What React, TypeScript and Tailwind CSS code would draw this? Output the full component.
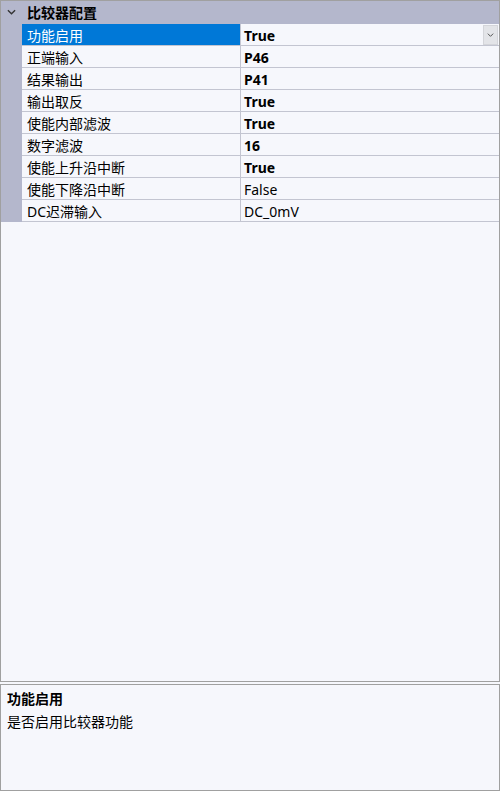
import React from 'react';

type Row = { name: string; value: string; bold: boolean };

const rows: Row[] = [
  { name: '功能启用', value: 'True', bold: true },
  { name: '正端输入', value: 'P46', bold: true },
  { name: '结果输出', value: 'P41', bold: true },
  { name: '输出取反', value: 'True', bold: true },
  { name: '使能内部滤波', value: 'True', bold: true },
  { name: '数字滤波', value: '16', bold: true },
  { name: '使能上升沿中断', value: 'True', bold: true },
  { name: '使能下降沿中断', value: 'False', bold: false },
  { name: 'DC迟滞输入', value: 'DC_0mV', bold: false },
];

const font = { fontFamily: '"Noto Sans", "Noto Sans CJK SC", sans-serif' };

function Chevron({ className }: { className?: string }) {
  return (
    <svg viewBox="0 0 10 6" className={className} fill="none" stroke="currentColor" strokeWidth="1.5">
      <path d="M1 1l4 4 4-4" />
    </svg>
  );
}

export default function App() {
  return (
    <div className="w-[500px] h-[791px] bg-[#f6f7fc] flex flex-col gap-[2px] text-[14px] text-black" style={font}>
      {/* property grid */}
      <div className="h-[682px] border border-[#a0a0a0] flex flex-col">
        <div className="h-[23px] bg-[#b4b7cc] flex items-center shrink-0">
          <div className="w-[26px] pl-[6px] pb-[1px] flex items-center">
            <Chevron className="w-[9px] h-[6px] text-[#333]" />
          </div>
          <span className="font-bold leading-none pt-[1px]">比较器配置</span>
        </div>
        <div className="flex">
          <div className="w-[21px] bg-[#b4b7cc] shrink-0" />
          <div className="flex-1 flex flex-col">
            {rows.map((r, i) => (
              <div key={r.name} className="h-[22px] flex border-b border-[#c3c5d1]">
                <div
                  className={`w-[219px] shrink-0 border-r border-[#c3c5d1] pl-[5px] flex items-center leading-none pt-[2px] ${
                    i === 0 ? 'bg-[#0078d7] text-white' : ''
                  }`}
                >
                  {r.name}
                </div>
                <div className="flex-1 flex items-center pl-[3px] relative">
                  <span className={`leading-none pt-[2px] ${r.bold ? 'font-bold' : ''}`}>{r.value}</span>
                  {i === 0 && (
                    <div className="absolute right-[1px] top-[1px] w-[15px] h-[20px] bg-[#e3e4e8] border border-[#d4d5da] flex items-center justify-center">
                      <Chevron className="w-[7px] h-[4px] text-[#555]" />
                    </div>
                  )}
                </div>
              </div>
            ))}
          </div>
        </div>
      </div>
      {/* description */}
      <div className="flex-1 border border-[#a0a0a0] px-[6px] pt-[5px] flex flex-col gap-[5px]">
        <div className="font-bold leading-[18px]">功能启用</div>
        <div className="leading-[18px]">是否启用比较器功能</div>
      </div>
    </div>
  );
}
